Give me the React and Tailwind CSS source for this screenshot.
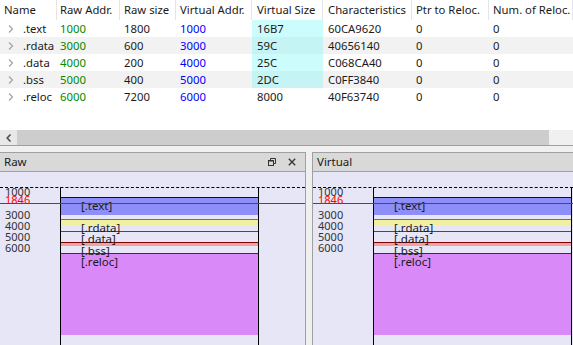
import React from "react";

const headers = ["Name", "Raw Addr.", "Raw size", "Virtual Addr.", "Virtual Size", "Characteristics", "Ptr to Reloc.", "Num. of Reloc."];
const rows = [
  [".text", "1000", "1800", "1000", "16B7", "60CA9620", "0", "0"],
  [".rdata", "3000", "600", "3000", "59C", "40656140", "0", "0"],
  [".data", "4000", "200", "4000", "25C", "C068CA40", "0", "0"],
  [".bss", "5000", "400", "5000", "2DC", "C0FF3840", "0", "0"],
  [".reloc", "6000", "7200", "6000", "8000", "40F63740", "0", "0"],
];

const gridCols = "grid grid-cols-[57px_63px_56px_76px_71px_89px_77px_84px]";

function Chevron() {
  return (
    <svg width="6" height="8" viewBox="0 0 6 8" className="ml-[8px] mr-[9px] shrink-0">
      <path d="M1 0.5 L4.5 4 L1 7.5" fill="none" stroke="#a6a6a6" strokeWidth="1.3" />
    </svg>
  );
}

function cellClass(ci, ri) {
  const gray = ri % 2 === 1;
  const base = "flex items-center whitespace-nowrap overflow-hidden ";
  if (ci === 0) return base + "text-[#1a1a1a]";
  if (ci === 1) return base + "pl-[3px] text-[#008a00]";
  if (ci === 3) return base + "pl-[4px] text-[#0000ff]";
  if (ci === 4) {
    if (ri < 4) return base + "pl-[5px] text-[#1a1a1a] " + (gray ? "bg-[#c6f3f3]" : "bg-[#cdfcfc]");
    return base + "pl-[5px] text-[#1a1a1a]";
  }
  if (ci === 5) return base + "pl-[5px] text-[#1a1a1a]";
  return base + "pl-[4px] text-[#1a1a1a]";
}

function Table() {
  return (
    <div className="h-[130px] bg-white text-[11.3px]">
      <div className={gridCols + " h-[20px]"}>
        {headers.map((h, i) => (
          <div key={i} className={"flex items-center border-r border-[#e5e5e5] whitespace-nowrap overflow-hidden text-[#1a1a1a] " + (i === 0 ? "pl-[4px]" : i === 1 ? "pl-[3px]" : i === 4 || i === 5 ? "pl-[5px]" : "pl-[4px]")}>
            {h}
          </div>
        ))}
      </div>
      {rows.map((r, ri) => (
        <div key={ri} className={gridCols + " h-[17px] " + (ri % 2 === 1 ? "bg-[#f2f2f2]" : "bg-white")}>
          {r.map((c, ci) => (
            <div key={ci} className={cellClass(ci, ri)}>
              {ci === 0 && <Chevron />}
              {c}
            </div>
          ))}
        </div>
      ))}
    </div>
  );
}

function Diagram({ numX, boxX }) {
  const nums = [
    ["1000", 14, "text-[#333]"],
    ["1846", 22, "text-[#ff0000]"],
    ["3000", 37, "text-[#333]"],
    ["4000", 48, "text-[#333]"],
    ["5000", 59, "text-[#333]"],
    ["6000", 70, "text-[#333]"],
  ];
  const labels = [
    ["[.text]", 27],
    ["[.rdata]", 49],
    ["[.data]", 60],
    ["[.bss]", 72],
    ["[.reloc]", 83],
  ];
  return (
    <div className="relative flex-1 bg-[#e6e6f6] overflow-hidden">
      <div className="absolute left-0 right-0 top-[15px] border-t border-dashed border-black" />
      <div className="absolute top-[15px] bottom-0 w-[199px] border-l border-r border-black border-t border-t-transparent" style={{ left: boxX }}>
        <div className="absolute left-0 right-0 top-[9px] h-[18px] bg-[#8e8ef8] border-t border-[#000080]" />
        <div className="absolute left-0 right-0 top-[31px] h-[6px] bg-[#f0f0a0] border-t border-[#808000]" />
        <div className="absolute left-0 right-0 top-[43px] border-t border-[#008000]" />
        <div className="absolute left-0 right-0 top-[54px] h-[4px] bg-[#f0a0a0] border-t border-[#800000]" />
        <div className="absolute left-0 right-0 top-[65px] h-[82px] bg-[#d98af8] border-t border-[#800080]" />
        {labels.map(([t, y]) => (
          <div key={t} className="absolute left-[20px] leading-[12px] text-[11.5px] text-[#1a1a1a] whitespace-nowrap" style={{ top: y - 15 }}>
            {t}
          </div>
        ))}
      </div>
      <div className="absolute left-0 right-0 top-[31px] border-t border-[#ff0000]" />
      {nums.map(([t, y, c]) => (
        <div key={t} className={"absolute leading-[12px] text-[11px] " + c} style={{ top: y, left: numX }}>
          {t}
        </div>
      ))}
    </div>
  );
}

function PanelHeader({ title, icons }) {
  return (
    <div className="h-[20px] shrink-0 bg-[#d9d9d9] border-y border-[#a0a0a0] flex items-center pl-[4px] text-[11.5px] text-[#1a1a1a]">
      <span className="flex-1">{title}</span>
      {icons && (
        <div className="flex items-center gap-[12px] pr-[9px]">
          <svg width="8" height="8" viewBox="0 0 8 8">
            <rect x="0.5" y="2.5" width="5" height="5" fill="none" stroke="#333" strokeWidth="1" />
            <path d="M2.5 2.5 V0.5 H7.5 V5.5 H5.5" fill="none" stroke="#333" strokeWidth="1" />
            <path d="M0.5 3 H5.5" stroke="#333" strokeWidth="1" />
          </svg>
          <svg width="8" height="8" viewBox="0 0 8 8">
            <path d="M0.8 0.8 L7.2 7.2 M7.2 0.8 L0.8 7.2" stroke="#333" strokeWidth="1.3" />
          </svg>
        </div>
      )}
    </div>
  );
}

export default function App() {
  return (
    <div className="w-[573px] h-[345px] overflow-hidden flex flex-col text-[12px] leading-none" style={{ fontFamily: '"Noto Sans", "Open Sans", sans-serif' }}>
      <Table />
      <div className="h-[16px] shrink-0 flex border-b border-[#a0a0a0]">
        <div className="w-[17px] bg-[#e8e8e8] flex items-center justify-center">
          <svg width="6" height="8" viewBox="0 0 6 8">
            <path d="M4.5 0.5 L1.2 4 L4.5 7.5" fill="none" stroke="#505050" strokeWidth="1.6" />
          </svg>
        </div>
        <div className="w-[532px] bg-[#cdcdcd]" />
        <div className="flex-1 bg-[#f0f0f0]" />
      </div>
      <div className="flex-1 flex bg-[#f0f0f0] pt-[6px] gap-[6px] min-h-0">
        <div className="w-[306px] flex flex-col border-r border-[#a0a0a0]">
          <PanelHeader title="Raw" icons />
          <Diagram numX={5} boxX={60} />
        </div>
        <div className="flex-1 flex flex-col border-l border-[#a0a0a0]">
          <PanelHeader title="Virtual" />
          <Diagram numX={5} boxX={60} />
        </div>
      </div>
    </div>
  );
}
